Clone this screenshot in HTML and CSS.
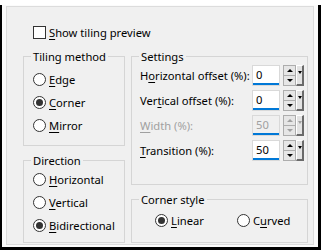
FILE: index.html
```html
<!DOCTYPE html>
<html lang="en">
<head>
  <meta charset="UTF-8">
  <title>Tiling options</title>
  <link rel="stylesheet" href="styles.css">
</head>
<body>
  <div class="frame">
    <div class="panel">
      <div class="check"><span class="box"></span><span><u>S</u>how tiling preview</span></div>

      <div class="columns">
        <div class="col-left">
          <fieldset class="group tiling">
            <legend>Tiling method</legend>
            <div class="items">
              <div class="radio"><span class="dot"></span><span><u>E</u>dge</span></div>
              <div class="radio"><span class="dot on"></span><span><u>C</u>orner</span></div>
              <div class="radio"><span class="dot"></span><span><u>M</u>irror</span></div>
            </div>
          </fieldset>
          <fieldset class="group direction">
            <legend>Direction</legend>
            <div class="items">
              <div class="radio"><span class="dot"></span><span><u>H</u>orizontal</span></div>
              <div class="radio"><span class="dot"></span><span><u>V</u>ertical</span></div>
              <div class="radio"><span class="dot on"></span><span><u>B</u>idirectional</span></div>
            </div>
          </fieldset>
        </div>

        <div class="col-right">
          <fieldset class="group settings">
            <legend>Settings</legend>
            <div class="items">
              <div class="row">
                <span class="label">H<u>o</u>rizontal offset (%):</span>
                <span class="field">0</span>
                <span class="spin"><span class="up"></span><span class="down"></span></span>
                <span class="drop"></span>
              </div>
              <div class="row">
                <span class="label">Ver<u>t</u>ical offset (%):</span>
                <span class="field">0</span>
                <span class="spin"><span class="up"></span><span class="down"></span></span>
                <span class="drop"></span>
              </div>
              <div class="row disabled">
                <span class="label"><u>W</u>idth (%):</span>
                <span class="field">50</span>
                <span class="spin"><span class="up"></span><span class="down"></span></span>
                <span class="drop"></span>
              </div>
              <div class="row">
                <span class="label"><u>T</u>ransition (%):</span>
                <span class="field">50</span>
                <span class="spin"><span class="up"></span><span class="down"></span></span>
                <span class="drop"></span>
              </div>
            </div>
          </fieldset>
          <fieldset class="group corner">
            <legend>Corner style</legend>
            <div class="items">
              <div class="radio"><span class="dot on"></span><span><u>L</u>inear</span></div>
              <div class="radio"><span class="dot"></span><span>C<u>u</u>rved</span></div>
            </div>
          </fieldset>
        </div>
      </div>
    </div>
  </div>
</body>
</html>
```

FILE: styles.css
```css
body {
  margin: 0;
  background: #fff;
  font-family: "Noto Sans", "Open Sans", sans-serif;
  font-size: 11.2px;
  line-height: 15px;
  color: #000;
}

u {
  text-underline-offset: 2px;
}

.frame {
  margin-top: 5px;
  height: 245px;
  box-sizing: border-box;
  border: solid #000;
  border-width: 0 3px 3px 2px;
  background: #fbfbfb;
  padding: 1px 4px 0 4px;
}

.panel {
  box-sizing: border-box;
  height: 239px;
  border: 1px solid #dcdcdc;
  background: #f0f0f0;
  padding: 19px 0 0 16px;
}

/* checkbox */
.check {
  display: flex;
  align-items: center;
  gap: 3px;
  height: 13px;
  margin-left: 10px;
}

.check .box {
  width: 13px;
  height: 13px;
  box-sizing: border-box;
  border: 1px solid #333;
  background: #fff;
}

.columns {
  display: flex;
  gap: 6px;
  margin-top: 10px;
}

.col-left,
.col-right {
  display: flex;
  flex-direction: column;
  gap: 7px;
}

.col-left { width: 102px; }
.col-right { width: 177px; }

/* group boxes */
.group {
  margin: 0;
  padding: 0;
  min-width: 0;
  box-sizing: border-box;
  border: 1px solid #d5d5d5;
}

.group legend {
  margin-left: 7px;
  padding: 0 2px;
  line-height: 15px;
}

.items {
  display: flex;
  flex-direction: column;
  gap: 5px;
}

.tiling { height: 97px; }
.tiling .items { padding: 6px 0 0 9px; }

.direction { height: 90px; }
.direction .items { padding: 2px 0 0 9px; }

.settings { height: 136px; }
.settings .items {
  gap: 4px;
  padding: 1px 0 0 8px;
}

.corner { height: 51px; }
.corner .items {
  flex-direction: row;
  gap: 0;
  padding: 4px 0 0 23px;
}

.corner .radio:first-child {
  width: 82px;
}

/* radio buttons */
.radio {
  display: flex;
  align-items: center;
  gap: 3px;
  height: 18px;
}

.dot {
  width: 13px;
  height: 13px;
  box-sizing: border-box;
  border: 1px solid #333;
  border-radius: 50%;
  background: #fff;
  display: flex;
  align-items: center;
  justify-content: center;
}

.dot.on::after {
  content: "";
  width: 7px;
  height: 7px;
  border-radius: 50%;
  background: #333;
}

/* spinner rows */
.row {
  display: flex;
  align-items: stretch;
  height: 21px;
}

.row .label {
  width: 112px;
  align-self: center;
}

.field {
  width: 28px;
  box-sizing: border-box;
  border: 1px solid #d9d9d9;
  background: #fff;
  box-shadow: inset 0 -2px 0 #0078d7;
  padding: 0 0 2px 3px;
  display: flex;
  align-items: center;
}

.spin {
  width: 13px;
  margin-left: 3px;
  display: flex;
  flex-direction: column;
}

.spin span {
  flex: 1;
  border: 1px solid #adadad;
  background: #e6e6e6;
  display: flex;
  align-items: center;
  justify-content: center;
}

.spin .down {
  border-top: none;
}

.spin .up::after,
.spin .down::after {
  content: "";
  border-left: 3px solid transparent;
  border-right: 3px solid transparent;
}

.spin .up::after { border-bottom: 3px solid #000; }
.spin .down::after { border-top: 3px solid #000; }

.drop {
  width: 8px;
  box-sizing: border-box;
  background: #e3e3e3;
  border-style: solid;
  border-width: 1px 2px 2px 1px;
  border-color: #fff #6a6a6a #6a6a6a #fff;
  display: flex;
  justify-content: center;
  padding-top: 5px;
}

.drop::after {
  content: "";
  height: 0;
  border-left: 2px solid transparent;
  border-right: 2px solid transparent;
  border-top: 3px solid #000;
}

.row.disabled .label,
.row.disabled .field {
  color: #a0a0a0;
}

.row.disabled .field {
  background: #f0f0f0;
}

.row.disabled .spin .up::after { border-bottom-color: #a0a0a0; }
.row.disabled .spin .down::after { border-top-color: #a0a0a0; }
.row.disabled .drop::after { border-top-color: #a0a0a0; }
```
